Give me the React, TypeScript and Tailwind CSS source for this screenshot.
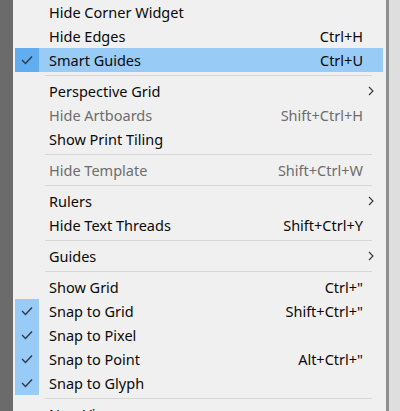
import React from "react";

type Item =
  | { sep: true }
  | {
      sep?: false;
      label: string;
      shortcut?: string;
      sub?: boolean;
      checked?: boolean;
      disabled?: boolean;
      active?: boolean;
    };

const items: Item[] = [
  { label: "Hide Corner Widget" },
  { label: "Hide Edges", shortcut: "Ctrl+H" },
  { label: "Smart Guides", shortcut: "Ctrl+U", checked: true, active: true },
  { sep: true },
  { label: "Perspective Grid", sub: true },
  { label: "Hide Artboards", shortcut: "Shift+Ctrl+H", disabled: true },
  { label: "Show Print Tiling" },
  { sep: true },
  { label: "Hide Template", shortcut: "Shift+Ctrl+W", disabled: true },
  { sep: true },
  { label: "Rulers", sub: true },
  { label: "Hide Text Threads", shortcut: "Shift+Ctrl+Y" },
  { sep: true },
  { label: "Guides", sub: true },
  { sep: true },
  { label: "Show Grid", shortcut: 'Ctrl+"' },
  { label: "Snap to Grid", shortcut: 'Shift+Ctrl+"', checked: true },
  { label: "Snap to Pixel", checked: true },
  { label: "Snap to Point", shortcut: 'Alt+Ctrl+"', checked: true },
  { label: "Snap to Glyph", checked: true },
  { sep: true },
  { label: "New View..." },
];

const Check = () => (
  <svg width="12" height="10" viewBox="0 0 12 10">
    <polyline points="1,5 4.5,8.5 11,1.5" fill="none" stroke="#2b3a4a" strokeWidth="1.4" />
  </svg>
);

const Chevron = () => (
  <svg width="6" height="10" viewBox="0 0 6 10">
    <polyline points="1,1 5,5 1,9" fill="none" stroke="#333" strokeWidth="1.1" />
  </svg>
);

export default function App() {
  return (
    <div
      className="flex h-[411px] w-[400px] overflow-hidden"
      style={{ fontFamily: "'Noto Sans', 'Open Sans', sans-serif" }}
    >
      <div className="w-[13px] bg-[#6b6b6b]" />
      <div className="w-[373px] bg-[#f0f0f0] pl-[2px] pr-[3px]">
        {items.map((it, i) =>
          it.sep ? (
            <div key={i} className="flex h-[7px] items-center">
              <div className="ml-[30px] mr-[11px] h-px flex-1 bg-[#d7d7d7]" />
            </div>
          ) : (
            <div
              key={i}
              className={`flex h-6 items-center text-[14.5px] ${
                it.active ? "bg-[#99cbf7]" : ""
              } ${it.disabled ? "text-[#6d6d6d]" : "text-[#0a0a0a]"}`}
            >
              <div
                className={`flex h-6 w-6 items-center justify-center ${
                  it.checked ? (it.active ? "bg-[#62adf0]" : "bg-[#99cbf7]") : ""
                }`}
              >
                {it.checked && <Check />}
              </div>
              <div className="flex-1 pl-[10px] leading-none">{it.label}</div>
              <div className="leading-none">{it.shortcut}</div>
              <div className="flex w-[20px] items-center pl-[5px]">{it.sub && <Chevron />}</div>
            </div>
          )
        )}
      </div>
      <div className="w-[3px] bg-[#8e8e8e]" />
      <div className="flex-1 bg-[#dedede]" />
    </div>
  );
}
